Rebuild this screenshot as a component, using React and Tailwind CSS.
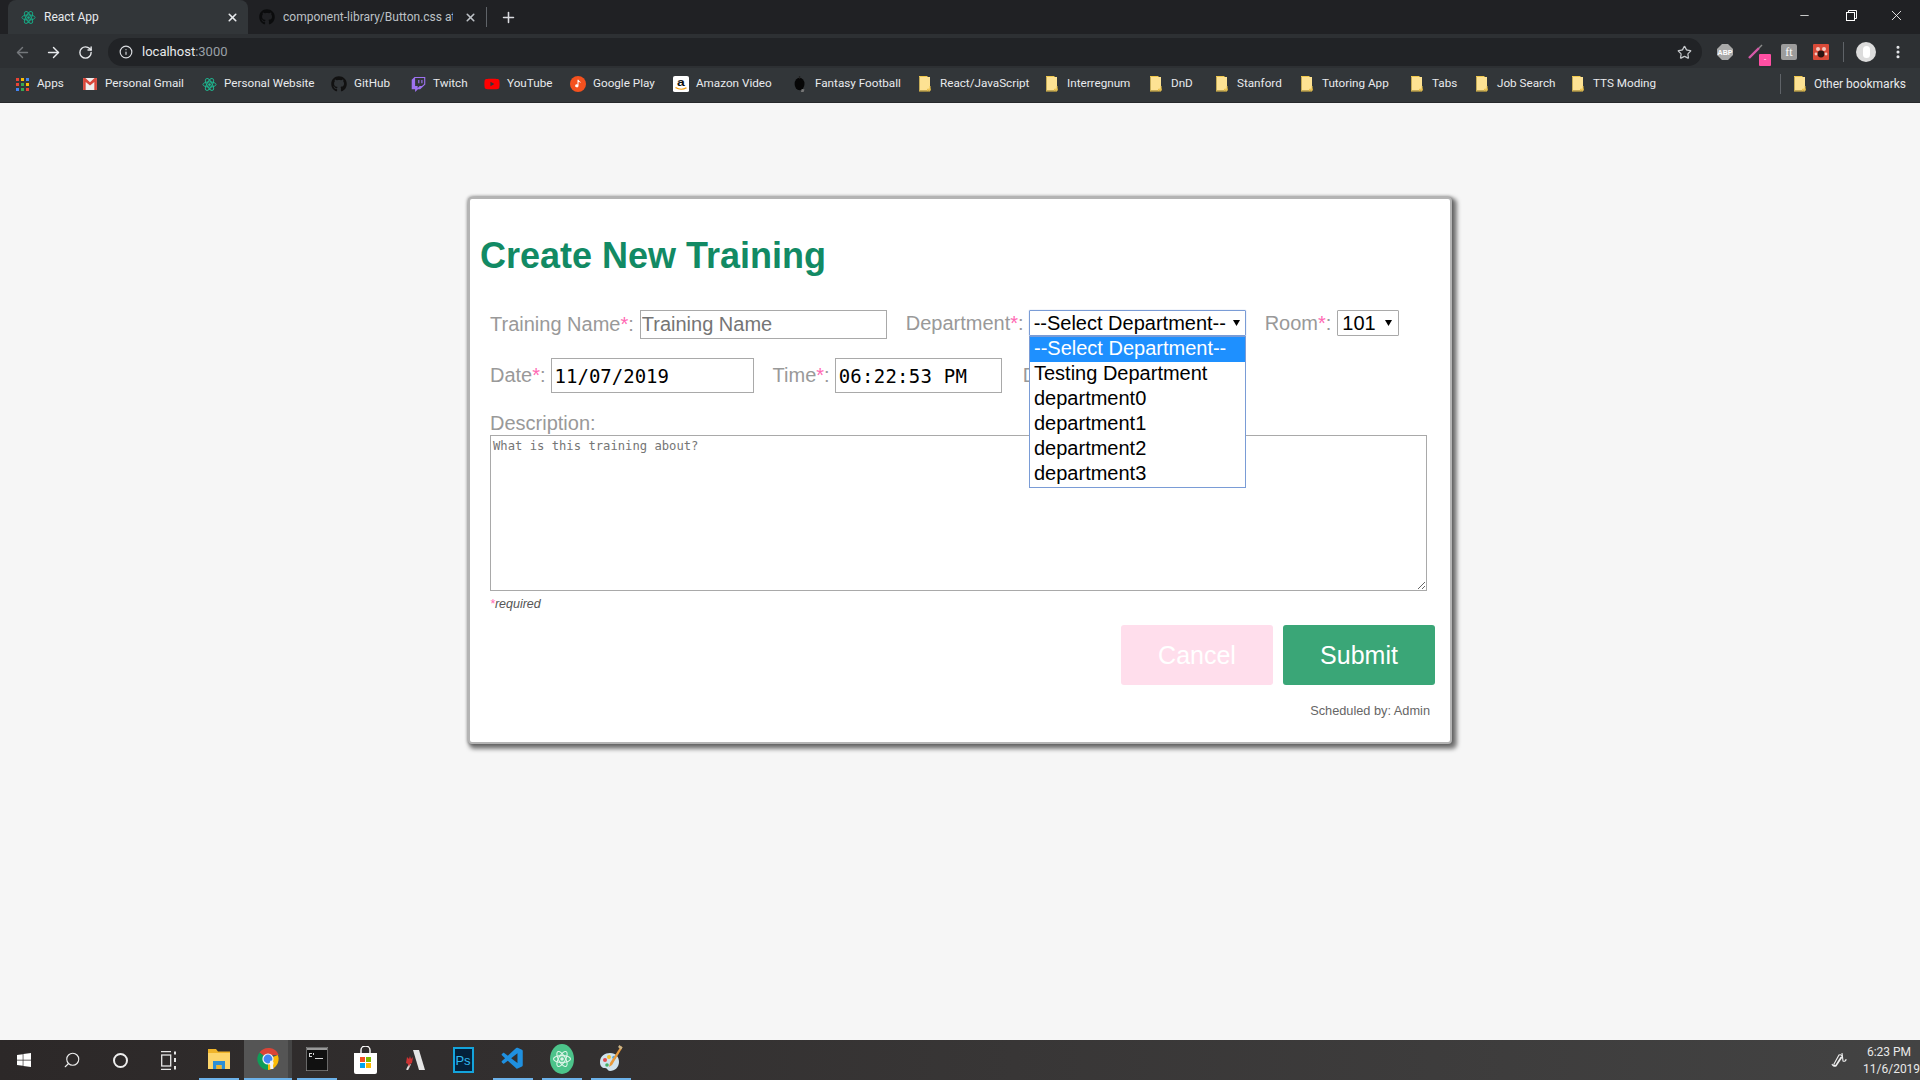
import React from "react";
import { FaGithub, FaTwitch, FaYoutube, FaWindows } from "react-icons/fa";
import { VscVscode } from "react-icons/vsc";
import { ArrowLeft, ArrowRight, RotateCw, Info, Star, Plus, X, Minus, MoreVertical, Search } from "lucide-react";

const Atom = ({ size = 16, color = "#1fb58f" }) => (
  <svg width={size} height={size} viewBox="0 0 24 24" fill="none" stroke={color} strokeWidth="1.6">
    <circle cx="12" cy="12" r="2.2" fill={color} stroke="none" />
    <ellipse cx="12" cy="12" rx="10.5" ry="4.2" />
    <ellipse cx="12" cy="12" rx="10.5" ry="4.2" transform="rotate(60 12 12)" />
    <ellipse cx="12" cy="12" rx="10.5" ry="4.2" transform="rotate(120 12 12)" />
  </svg>
);

const Folder = () => (
  <svg width="12" height="16" viewBox="0 0 12 16">
    <path d="M0.5 1h10.5v13.5H0.5z" fill="#fde293" />
    <path d="M0 .5h8.5M11 10v5H0V.5" fill="none" stroke="#f2c94c" strokeWidth="1" />
    <path d="M8.5 15v-1.8H12" fill="none" stroke="#e7bb44" strokeWidth="1" />
  </svg>
);

const Apps = () => {
  const c = ["#ea4335", "#fbbc04", "#4285f4", "#ea4335", "#34a853", "#fbbc04", "#4285f4", "#34a853", "#ea4335"];
  return (
    <div className="grid grid-cols-3 gap-[2px] w-[13px]">
      {c.map((k, i) => (
        <svg key={i} width="3" height="3"><rect width="3" height="3" fill={k} /></svg>
      ))}
    </div>
  );
};

const Gmail = () => (
  <svg width="14" height="12" viewBox="0 0 15 13">
    <rect width="15" height="13" fill="#eeeeee" />
    <path d="M0 0h2.5L7.5 4.5 12.5 0H15v13h-2.8V4.2L7.5 8.2 2.8 4.2V13H0z" fill="#d8473b" />
  </svg>
);

const GooglePlay = () => (
  <svg width="16" height="16" viewBox="0 0 16 16">
    <circle cx="8" cy="8" r="8" fill="#f4511e" />
    <path d="M8.5 3.8v6a1.7 1.5 0 1 1-1-1.3V3.8z M8.5 3.8c.6 1.6 2.4 1.6 2.3 3.4-.6-1-1.4-1-2.3-1.2z" fill="#fff" />
  </svg>
);

const Amazon = () => (
  <svg width="16" height="16" viewBox="0 0 16 20" preserveAspectRatio="none">
    <rect width="16" height="20" rx="2" fill="#fff" />
    <text x="8" y="12" textAnchor="middle" fontFamily="Liberation Sans, sans-serif" fontWeight="700" fontSize="14" fill="#111">a</text>
    <path d="M2.5 14.5c3.5 2.6 7.5 2.6 11 .3" fill="none" stroke="#f59e0b" strokeWidth="1.5" />
  </svg>
);

const Bomb = () => (
  <svg width="14" height="17" viewBox="0 0 14 19">
    <ellipse cx="6.5" cy="9" rx="5.5" ry="7" fill="#060606" />
    <path d="M6.5 0v3" stroke="#222" strokeWidth="1.5" />
    <path d="M9 14.5l3 .5-1 3H8z" fill="#777" />
  </svg>
);

const bookmarks = [
  { w: 68, icon: <Apps />, t: "Apps" },
  { w: 119, icon: <Gmail />, t: "Personal Gmail" },
  { w: 130, icon: <Atom size={15} />, t: "Personal Website" },
  { w: 79, icon: <FaGithub size={16} color="#111" />, t: "GitHub" },
  { w: 74, icon: <FaTwitch size={15} color="#9d72f0" />, t: "Twitch" },
  { w: 86, icon: <FaYoutube size={16} color="#f00" />, t: "YouTube" },
  { w: 103, icon: <GooglePlay />, t: "Google Play" },
  { w: 119, icon: <Amazon />, t: "Amazon Video" },
  { w: 125, icon: <Bomb />, t: "Fantasy Football" },
  { w: 127, icon: <Folder />, t: "React/JavaScript" },
  { w: 104, icon: <Folder />, t: "Interregnum" },
  { w: 66, icon: <Folder />, t: "DnD" },
  { w: 85, icon: <Folder />, t: "Stanford" },
  { w: 110, icon: <Folder />, t: "Tutoring App" },
  { w: 65, icon: <Folder />, t: "Tabs" },
  { w: 96, icon: <Folder />, t: "Job Search" },
  { w: 100, icon: <Folder />, t: "TTS Moding" },
];

const ChromeLogo = () => (
  <svg width="24" height="24" viewBox="0 0 24 24" className="overflow-visible">
    <path d="M12 12L3.5 5.5A11 11 0 0 1 22.7 8H12z" fill="#db4437" />
    <path d="M12 12l9.8-4A11 11 0 0 1 12 23z" fill="#fbbc05" />
    <path d="M12 12v11A11 11 0 0 1 3.5 5.5z" fill="#0f9d58" />
    <circle cx="12" cy="12" r="5.6" fill="#f1f1f1" />
    <circle cx="12" cy="12" r="4.4" fill="#4285f4" />
    <path d="M15 13.5c1.6 0 2.6 1 2.6 2.4 0 1.2-.6 1.8-.6 3l.5 3.2h-3.2l-.2-4.2c-.5-1.5-.3-4.4.9-4.4z" fill="#f4f4f4" />
  </svg>
);

const Explorer = () => (
  <svg width="24" height="24" viewBox="0 0 24 24">
    <path d="M1 2h8l2 2.5h12V22H1z" fill="#f0b429" />
    <rect x="1" y="6" width="22" height="16" fill="#fdd56b" />
    <path d="M6 22v-8h12v8h-3.5v-4h-5v4z" fill="#2d8fd5" />
    <rect x="9.5" y="18" width="5" height="4" fill="#f0b429" />
  </svg>
);

const Terminal = () => (
  <svg width="22" height="24" viewBox="0 0 22 24">
    <rect width="22" height="24" fill="#111" stroke="#8d8d8d" strokeWidth="1.4" />
    <rect x="1" y="1" width="20" height="2" fill="#9a9a9a" />
    <path d="M3 6h3v1H4v2h2v1H3zm4 0h1v2H7zm2 5h8v1H9z" fill="#d8d8d8" />
  </svg>
);

const Store = () => (
  <svg width="23" height="28" viewBox="0 0 23 28">
    <path d="M7 7V4a4.5 4 0 0 1 9 0v3" fill="none" stroke="#fff" strokeWidth="1.4" />
    <path d="M0 7h23v19a2 2 0 0 1-2 2H2a2 2 0 0 1-2-2z" fill="#fff" />
    <rect x="6" y="11" width="5" height="5" fill="#f25022" />
    <rect x="12" y="11" width="5" height="5" fill="#7fba00" />
    <rect x="6" y="17" width="5" height="5" fill="#00a4ef" />
    <rect x="12" y="17" width="5" height="5" fill="#ffb900" />
  </svg>
);

const Arena = () => (
  <svg width="22" height="20" viewBox="0 0 22 20">
    <path d="M10 0h6l6 20h-6l-3-10z" fill="#e5e5e5" />
    <path d="M4 20l3-6" stroke="#ddd" strokeWidth="2" />
    <path d="M4 7l2 2 1-3 1 3 2-2-1 6-2 1-1 3-1-3-2-1z" fill="#c33" />
  </svg>
);

const Photoshop = () => (
  <div className="w-[21px] h-[26px] bg-[#04203a] border-2 border-[#14a4dc] flex items-center justify-center text-[#2fb8ef] text-[13px] font-['Liberation_Sans',sans-serif] leading-none">
    Ps
  </div>
);

const AtomApp = () => (
  <svg width="24" height="30" viewBox="0 0 24 30">
    <ellipse cx="12" cy="15" rx="12" ry="15" fill="#4cc38a" />
    <g transform="translate(2.5 6)" fill="none" stroke="#dff5e9" strokeWidth="1.1">
      <circle cx="9.5" cy="9" r="1.8" fill="#dff5e9" stroke="none" />
      <ellipse cx="9.5" cy="9" rx="8.5" ry="3.4" />
      <ellipse cx="9.5" cy="9" rx="8.5" ry="3.4" transform="rotate(60 9.5 9)" />
      <ellipse cx="9.5" cy="9" rx="8.5" ry="3.4" transform="rotate(120 9.5 9)" />
    </g>
  </svg>
);

const Palette = () => (
  <svg width="24" height="28" viewBox="0 0 24 28">
    <path d="M1 17c0-6 5-9 10-9 6 0 9 4 9 9s-4 9-9 9c-3 0-2-3-5-3-3 0-5-2-5-6z" fill="#cfe3ee" />
    <circle cx="6" cy="15" r="2" fill="#e34b4b" />
    <circle cx="10" cy="12" r="2" fill="#f4c430" />
    <circle cx="15" cy="12.5" r="1.8" fill="#4aa3df" />
    <circle cx="8" cy="20" r="1.8" fill="#46b06a" />
    <path d="M22 1l1.5 1.5L13 20l-3 2 1-4z" fill="#e89a3c" />
    <path d="M20.5 0l3 2.5-1.5 2-3-2.5z" fill="#c9b48a" />
  </svg>
);

const TaskView = () => (
  <svg width="15" height="19" viewBox="0 0 15 19" fill="none" stroke="#e6e6e6" strokeWidth="1.3">
    <path d="M0 .7h10M0 18.3h10" />
    <rect x=".7" y="4" width="9" height="11" />
    <path d="M14 .5v3M14 7v4M14 15v3.5" strokeWidth="2" />
  </svg>
);

const SelectArrow = () => (
  <svg width="7" height="6" viewBox="0 0 7 6"><path d="M0 0h7L3.5 6z" fill="#000" /></svg>
);

const Req = () => <span className="text-[#ff69b4]">*</span>;

const options = ["--Select Department--", "Testing Department", "department0", "department1", "department2", "department3"];

function Browser() {
  return (
    <div className="font-['Roboto',sans-serif] text-[11.7px] text-[#e8eaed]">
      <div className="h-[34px] bg-[#202124] flex items-end pl-2">
        <div className="w-[240px] h-[34px] bg-[#323639] rounded-t-lg flex items-center pl-[13px] pr-[9px]">
          <Atom size={15} color="#18a884" />
          <span className="ml-[8px] flex-1 text-[12px]">React App</span>
          <X size={13} strokeWidth={3} color="#e8eaed" />
        </div>
        <div className="w-[238px] h-[34px] flex items-center pl-[11px]">
          <FaGithub size={16} color="#0b0c0d" />
          <span className="ml-[8px] w-[170px] overflow-hidden whitespace-nowrap text-[12px] text-[#bdc1c6]">component-library/Button.css at</span>
          <X size={13} strokeWidth={3} color="#bdc1c6" className="ml-[11px]" />
        </div>
        <div className="w-px h-5 bg-[#5f6368] mb-[7px]" />
        <Plus size={17} strokeWidth={2.2} color="#dadce0" className="ml-[13px] mb-[8px]" />
        <div className="flex-1" />
        <div className="flex items-center h-[34px] text-white pb-[4px]">
          <Minus size={13} strokeWidth={1.4} className="mr-[35px]" />
          <svg width="11" height="11" viewBox="0 0 11 11" fill="none" stroke="#fff" strokeWidth="1" className="mr-[31px]">
            <rect x=".5" y="2.5" width="8" height="8" />
            <path d="M2.5 2.5V.5h8v8H8.5" />
          </svg>
          <X size={17} strokeWidth={1.2} className="mr-[15px]" />
        </div>
      </div>

      <div className="h-[34px] bg-[#2d3033] flex items-center pt-[2px]">
        <ArrowLeft size={17} strokeWidth={2} color="#75787c" className="ml-[14px]" />
        <ArrowRight size={17} strokeWidth={2} color="#e8eaed" className="ml-[14px]" />
        <RotateCw size={15} strokeWidth={2.2} color="#e8eaed" className="ml-[16px]" />
        <div className="ml-[15px] w-[1594px] h-[28px] rounded-full bg-[#212326] flex items-center pl-[11px] pr-[10px]">
          <Info size={14} strokeWidth={2} color="#dadce0" />
          <span className="ml-[9px] text-[13px] text-[#e8eaed]">localhost<span className="text-[#9aa0a6]">:3000</span></span>
          <div className="flex-1" />
          <Star size={15} strokeWidth={2} color="#c5c8cb" />
        </div>
        <div className="relative ml-[15px] h-[28px] flex items-center">
          <svg width="16" height="16" viewBox="0 0 16 16">
            <path d="M5 0h6l5 5v6l-5 5H5l-5-5V5z" fill="#a9a9a9" />
            <text x="8" y="11" textAnchor="middle" fontSize="7" fontWeight="700" fill="#fff" fontFamily="Liberation Sans, sans-serif">ABP</text>
          </svg>
          <svg width="17" height="16" viewBox="0 0 17 16" className="ml-[14px]">
            <path d="M2 14L12 4" stroke="#d65aa8" strokeWidth="2.4" />
            <path d="M12 4l3-3" stroke="#8a8a8a" strokeWidth="1.4" />
          </svg>
          <div className="absolute left-[42px] top-[16px] w-[12px] h-[12px] bg-[#ff4fa3] rounded-[1px] flex items-center justify-center text-white text-[8px] leading-none">-</div>
          <div className="ml-[17px] w-4 h-4 rounded-[2px] bg-[#9c9c9c] flex items-center justify-center text-white text-[12px] font-['Liberation_Serif',serif] leading-none">ft</div>
          <svg width="16" height="16" viewBox="0 0 16 16" className="ml-[16px]">
            <rect width="16" height="16" rx="1" fill="#d94a38" />
            <circle cx="5" cy="5" r="2" fill="#f3c8c0" />
            <circle cx="11" cy="5" r="2" fill="#f3c8c0" />
            <circle cx="8" cy="10" r="3.4" fill="#2a1512" />
            <circle cx="3" cy="10" r="1.4" fill="#f3c8c0" />
            <circle cx="13" cy="10" r="1.4" fill="#f3c8c0" />
          </svg>
        </div>
        <div className="w-px h-5 bg-[#5f6368] ml-[14px]" />
        <div className="ml-[12px] w-5 h-5 rounded-full bg-[#dcdcdc] flex items-center justify-center">
          <div className="w-[7px] h-[12px] rounded-full bg-white" />
        </div>
        <MoreVertical size={16} strokeWidth={2.6} color="#e8eaed" className="ml-[14px]" />
      </div>

      <div className="h-[35px] bg-[#323639] flex items-center pl-[14px] pb-[2px] border-b border-[#26282b]">
        {bookmarks.map((b) => (
          <div key={b.t} style={{ width: b.w }} className="shrink-0 flex items-center h-full whitespace-nowrap">
            <div className="w-[16px] flex items-center justify-center shrink-0">{b.icon}</div>
            <span className="ml-[7px]">{b.t}</span>
          </div>
        ))}
        <div className="flex-1" />
        <div className="w-px h-5 bg-[#5f6368] mr-[11px]" />
        <div className="w-[16px] flex justify-center"><Folder /></div>
        <span className="ml-[6px] mr-[14px] text-[12px]">Other bookmarks</span>
      </div>
    </div>
  );
}

function Field({ children }) {
  return <label className="block text-[#999999] text-[20px] leading-[23px] whitespace-nowrap">{children}</label>;
}

function Card() {
  return (
    <div className="relative w-[980px] mx-auto bg-white rounded-[2px] shadow-[0_0_0_2px_#b4b4b4,0_0_3px_3px_rgba(0,0,0,0.25),3px_3px_4px_4px_rgba(0,0,0,0.5)] font-['Liberation_Sans',sans-serif] pb-[22px]">
      <h1 className="pl-[10px] pt-[33px] h-[80px] text-[36px] leading-[48px] font-bold text-[#128a64]">Create New Training</h1>

      <div className="mt-[31px] pl-[20px] flex items-start h-[29px]">
        <div className="h-[29px] flex items-center"><Field>Training Name<Req />:</Field></div>
        <input
          placeholder="Training Name"
          className="ml-[6px] w-[247px] h-[29px] border border-[#a9a9a9] pl-[1px] pb-[1px] text-[20px] placeholder:text-[#757575] outline-none"
        />
        <div className="ml-[19px] h-[26px] flex items-center"><Field>Department<Req />:</Field></div>
        <div className="relative ml-[5px] w-[217px] h-[26px] border border-[#7a9cd6] rounded-[1px] flex items-center pl-[4px] text-[20px] text-black shadow-[0_0_1px_#7a9cd6]">
          --Select Department--
          <div className="absolute right-[5px] top-[9px]"><SelectArrow /></div>
        </div>
        <div className="ml-[19px] h-[26px] flex items-center"><Field>Room<Req />:</Field></div>
        <div className="relative ml-[6px] w-[62px] h-[26px] border border-[#a9a9a9] rounded-[1px] flex items-center pl-[4px] text-[20px] text-black">
          101
          <div className="absolute right-[6px] top-[9px]"><SelectArrow /></div>
        </div>
      </div>

      <div className="mt-[19px] pl-[20px] flex items-center h-[35px]">
        <Field>Date<Req />:</Field>
        <input
          defaultValue="11/07/2019"
          className="ml-[5px] w-[203px] h-[35px] border border-[#a9a9a9] pl-[3px] font-['DejaVu_Sans_Mono',monospace] text-[19px] text-black outline-none"
        />
        <div className="ml-[19px]"><Field>Time<Req />:</Field></div>
        <input
          defaultValue="06:22:53 PM"
          className="ml-[5px] w-[167px] h-[35px] border border-[#a9a9a9] pl-[3px] font-['DejaVu_Sans_Mono',monospace] text-[19px] tracking-[0.25px] text-black outline-none"
        />
        <div className="ml-[21px]"><Field>Duration<Req />:</Field></div>
      </div>

      <div className="mt-[19px] pl-[20px]">
        <div className="h-[23px]"><Field>Description:</Field></div>
        <textarea
          placeholder="What is this training about?"
          className="block w-[937px] h-[156px] border border-[#a9a9a9] px-[2px] pt-[3px] font-['DejaVu_Sans_Mono',monospace] text-[12.2px] leading-[14px] placeholder:text-[#757575] outline-none"
        />
        <p className="mt-[5px] h-[15px] text-[12.5px] leading-[17px] italic text-[#555555]"><Req />required</p>
      </div>

      <div className="mt-[14px] pr-[15px] flex justify-end gap-[10px]">
        <button className="w-[152px] h-[60px] pt-[2px] rounded-[3px] bg-[#ffdeec] text-white text-[25px]">Cancel</button>
        <button className="w-[152px] h-[60px] pt-[2px] rounded-[3px] bg-[#3aa677] text-white text-[25px]">Submit</button>
      </div>

      <p className="mt-[17px] pr-[20px] text-right text-[12.75px] leading-[18px] text-[#666666]">Scheduled by: Admin</p>

      <div className="absolute left-[559px] top-[137px] w-[217px] border border-[#7a9cd6] bg-white text-[20px] leading-[23px] text-black">
        {options.map((o, i) => (
          <div key={o} className={i === 0 ? "h-[25px] pl-[4px] bg-[#1e90ff] text-white" : "h-[25px] pl-[4px]"}>{o}</div>
        ))}
      </div>
    </div>
  );
}

function Taskbar() {
  const active = "h-full flex items-center justify-center border-b-2 border-[#6cb2ea]";
  const plain = "h-full flex items-center justify-center";
  return (
    <div className="h-[40px] bg-linear-to-r from-[#2c2828] to-[#434343] flex items-center text-white font-['Roboto',sans-serif]">
      <div className={`w-[48px] ${plain}`}><FaWindows size={16} color="#fff" /></div>
      <div className={`w-[48px] ${plain}`}><Search size={18} strokeWidth={1.5} color="#eee" className="-scale-x-100" /></div>
      <div className={`w-[48px] ${plain}`}>
        <div className="w-[15px] h-[15px] rounded-full border-[2.5px] border-[#eee]" />
      </div>
      <div className={`w-[48px] ${plain}`}><TaskView /></div>
      <div className={`ml-[7px] w-[40px] ${active}`}><Explorer /></div>
      <div className="ml-[5px] w-[48px] h-full flex border-b-2 border-[#6cb2ea] bg-[#444444]">
        <div className="w-[44px] h-full bg-[#555555] pl-[4px] flex items-center justify-center"><ChromeLogo /></div>
      </div>
      <div className={`ml-[5px] w-[40px] ${active}`}><Terminal /></div>
      <div className={`ml-[8px] w-[40px] ${plain}`}><Store /></div>
      <div className={`ml-[9px] w-[40px] ${plain}`}><Arena /></div>
      <div className={`ml-[9px] w-[40px] ${plain}`}><Photoshop /></div>
      <div className={`ml-[10px] w-[40px] ${active}`}><VscVscode size={26} color="#1f90e0" /></div>
      <div className={`ml-[9px] w-[40px] ${active}`}><AtomApp /></div>
      <div className={`ml-[9px] w-[40px] ${active}`}><Palette /></div>
      <div className="flex-1" />
      <svg width="18" height="18" viewBox="0 0 18 18" fill="none" stroke="#eee" strokeWidth="1.1" className="mr-[15px]">
        <path d="M2 13a3 3 0 0 0 4 2l6-9a2 2 0 0 0-3-2l-5 9a1 1 0 0 0 2 1l5-8" />
        <path d="M12 2l1 8a2 2 0 0 0 3-2" />
      </svg>
      <div className="w-[52px] mr-[5px] pt-[1px] text-[12px] leading-[17px] text-[#e8e8e8] text-center whitespace-nowrap">
        <div>6:23 PM</div>
        <div>11/6/2019</div>
      </div>
    </div>
  );
}

export default function App() {
  return (
    <div className="w-[1920px] h-[1080px] bg-[#f6f6f6] flex flex-col overflow-hidden">
      <Browser />
      <div className="flex-1 pt-[96px]">
        <Card />
      </div>
      <Taskbar />
    </div>
  );
}
